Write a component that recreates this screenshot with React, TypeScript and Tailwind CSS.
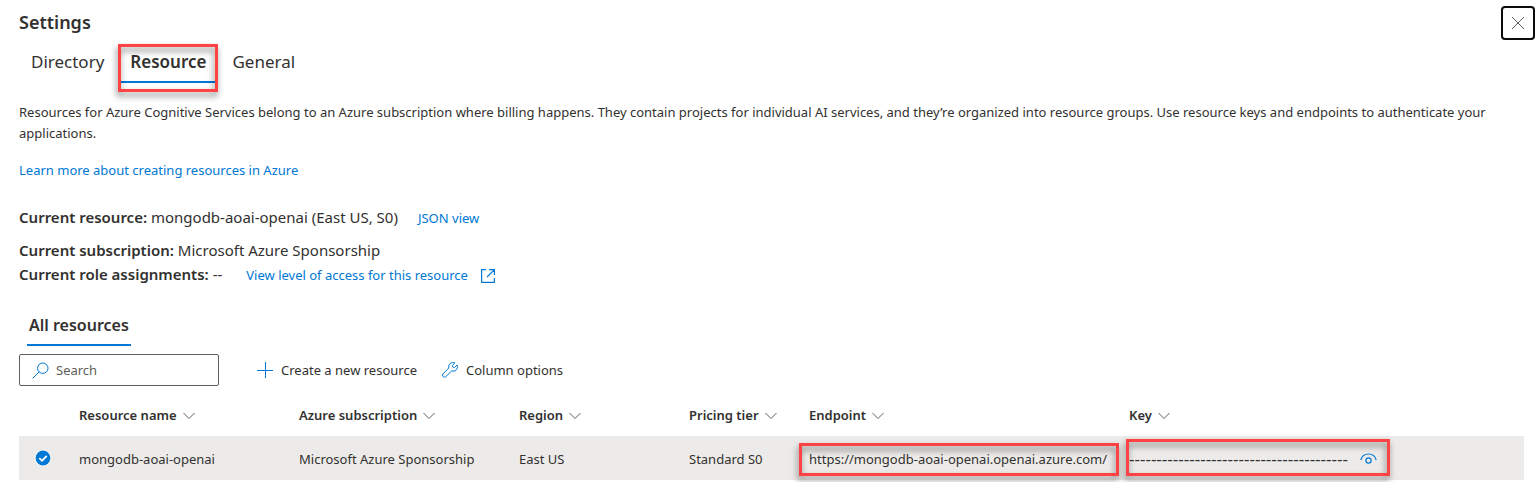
import { useState } from 'react';
import type { ReactNode } from 'react';

const tabs = ['Directory', 'Resource', 'General'];

const columns = [
  { label: 'Resource name', width: 'w-[220px]' },
  { label: 'Azure subscription', width: 'w-[220px]' },
  { label: 'Region', width: 'w-[170px]' },
  { label: 'Pricing tier', width: 'w-[120px]' },
  { label: 'Endpoint', width: 'w-[320px]' },
  { label: 'Key', width: '' },
];

function Highlight({ className }: { className: string }) {
  return (
    <span
      aria-hidden="true"
      className={`pointer-events-none absolute border-3 border-[#fd4343] drop-shadow-[-1px_4px_3px_rgba(0,0,0,0.5)] ${className}`}
    />
  );
}

function Chevron() {
  return (
    <svg width="12" height="8" viewBox="0 0 12 8" fill="none" stroke="#605e5c" aria-hidden="true">
      <path d="M0.5 1 6 6.5 11.5 1" />
    </svg>
  );
}

function Fact({ label, children }: { label: string; children: ReactNode }) {
  return (
    <p>
      <strong className="font-semibold">{label}</strong> {children}
    </p>
  );
}

export default function App() {
  const [tab, setTab] = useState('Resource');
  return (
    <main className="min-h-screen bg-white pr-4 pl-[19px] font-['Noto_Sans','Open_Sans',sans-serif] text-[13px] text-[#323130]">
      <header className="-mr-[11px] flex h-11 items-center justify-between">
        <h1 className="text-lg leading-6 font-semibold">Settings</h1>
        <button
          aria-label="Close"
          className="mt-0.5 flex size-[34px] items-center justify-center rounded-sm border-2 border-[#0b0b0b] bg-white"
        >
          <svg width="14" height="14" viewBox="0 0 14 14" fill="none" stroke="#605e5c" aria-hidden="true">
            <path d="M1 1l12 12M13 1 1 13" />
          </svg>
        </button>
      </header>

      <nav className="flex gap-2 pl-[3px]">
        {tabs.map((name) => (
          <button
            key={name}
            onClick={() => setTab(name)}
            className={`relative h-[39px] border-b-2 px-[9px] pb-0.5 text-[17px] leading-6 ${
              tab === name ? 'border-[#0078d4] font-semibold' : 'border-transparent'
            }`}
          >
            {name}
            {name === 'Resource' && <Highlight className="-inset-x-[3px] top-0 -bottom-[11px]" />}
          </button>
        ))}
      </nav>

      <p className="mt-[19px] leading-[21px]">
        Resources for Azure Cognitive Services belong to an Azure subscription where billing happens. They contain
        projects for individual AI services, and they’re organized into resource groups. Use resource keys and
        endpoints to authenticate your applications.
      </p>
      <a href="#learn" className="mt-4 block w-fit leading-5 text-[#0078d4]">
        Learn more about creating resources in Azure
      </a>

      <section className="mt-[25px] text-[15px] leading-6">
        <div className="flex items-center gap-5">
          <Fact label="Current resource:">mongodb-aoai-openai (East US, S0)</Fact>
          <a href="#json" className="pt-0.5 text-[13px] leading-5 text-[#0078d4]">JSON view</a>
        </div>
        <div className="mt-[9px]">
          <Fact label="Current subscription:">Microsoft Azure Sponsorship</Fact>
        </div>
        <div className="flex items-center gap-6">
          <Fact label="Current role assignments:">--</Fact>
          <a href="#access" className="flex items-center gap-3 pt-0.5 text-[13px] leading-5 text-[#0078d4]">
            View level of access for this resource
            <svg className="mt-0.5" width="16" height="16" viewBox="0 0 16 16" fill="none" stroke="currentColor" strokeWidth="1.2" aria-hidden="true">
              <path d="M6 1.6H1.6v12.8h12.8V10M9 1.6h5.4V7M14.2 1.8 7 9" />
            </svg>
          </a>
        </div>
      </section>

      <h2 className="mt-[25px] ml-2 flex h-[35px] w-fit border-b-2 border-[#0078d4] px-0.5 pt-0.5 text-base leading-6 font-semibold">
        All resources
      </h2>

      <div className="mt-2 flex h-8 items-center">
        <label className="flex h-8 w-[200px] items-center gap-[7px] rounded-xs border border-[#605e5c] px-3">
          <svg width="17" height="17" viewBox="0 0 17 17" fill="none" stroke="#0078d4" aria-hidden="true">
            <circle cx="10.8" cy="6.2" r="5.2" />
            <path d="M7.1 9.9.6 16.4" />
          </svg>
          <input
            type="search"
            aria-label="Search"
            placeholder="Search"
            className="min-w-0 flex-1 bg-transparent pt-0.5 outline-none placeholder:text-[#605e5c]"
          />
        </label>
        <button className="ml-[38px] flex items-center gap-2">
          <svg width="16" height="16" viewBox="0 0 16 16" fill="none" stroke="#0078d4" aria-hidden="true">
            <path d="M8.5 0v16M0 8.5h16" />
          </svg>
          <span className="pt-0.5">Create a new resource</span>
        </button>
        <button className="ml-[25px] flex items-center gap-2">
          <svg width="16" height="16" viewBox="0 0 16 16" fill="none" stroke="#0078d4" strokeLinejoin="round" aria-hidden="true">
            <path d="M12.800.9A4.300 4.300 0 0 0 6.800 6L1.100 11.800a1.900 1.900 0 0 0 0 2.800c.8.8 2 .8 2.800 0l5.800-5.700A4.300 4.300 0 0 0 15.100 3L12.400 5.600 10.800 5 10.300 3.500z" />
          </svg>
          <span className="pt-0.5">Column options</span>
        </button>
      </div>

      <table className="mt-2 w-full table-fixed text-left">
        <thead>
          <tr className="h-[42px]">
            <th className="w-[60px]" aria-label="Selected" />
            {columns.map(({ label, width }) => (
              <th key={label} className={`p-0 pt-0.5 font-semibold ${width}`}>
                <button className="flex items-center gap-1.5">
                  {label}
                  <Chevron />
                </button>
              </th>
            ))}
          </tr>
        </thead>
        <tbody>
          <tr className="h-11 bg-[#edebe9] whitespace-nowrap">
            <td className="p-0 pl-4">
              <svg width="16" height="16" viewBox="0 0 16 16" role="img" aria-label="Selected">
                <circle cx="8" cy="8" r="8" fill="#fff" />
                <circle cx="8" cy="8" r="7.400" fill="#0078d4" />
                <path d="M4.300 8.100 7 10.700l4.800-4.900" fill="none" stroke="#fff" strokeWidth="1.700" />
              </svg>
            </td>
            <td className="p-0 pt-1">mongodb-aoai-openai</td>
            <td className="p-0 pt-1">Microsoft Azure Sponsorship</td>
            <td className="p-0 pt-1">East US</td>
            <td className="p-0 pt-1">Standard S0</td>
            <td className="relative p-0 pt-1">
              https://mongodb-aoai-openai.openai.azure.com/
              <Highlight className="top-[7px] right-2.5 bottom-1 -left-2.5" />
            </td>
            <td className="relative p-0 pt-0.5">
              <div className="flex items-center gap-3">
                <span className="text-[17px] leading-5">----------------------------------------</span>
                <button aria-label="Show key" className="text-[#0078d4]">
                  <svg width="17" height="12" viewBox="0 0 17 12" fill="none" stroke="currentColor" strokeWidth="1.200" aria-hidden="true">
                    <path d="M.8 7C1.800 3.200 4.800 1 8.500 1s6.700 2.200 7.700 6" />
                    <circle cx="8.500" cy="7.500" r="2.600" />
                  </svg>
                </button>
              </div>
              <Highlight className="top-[3px] bottom-1 -left-[3px] w-[264px]" />
            </td>
          </tr>
        </tbody>
      </table>
    </main>
  );
}
